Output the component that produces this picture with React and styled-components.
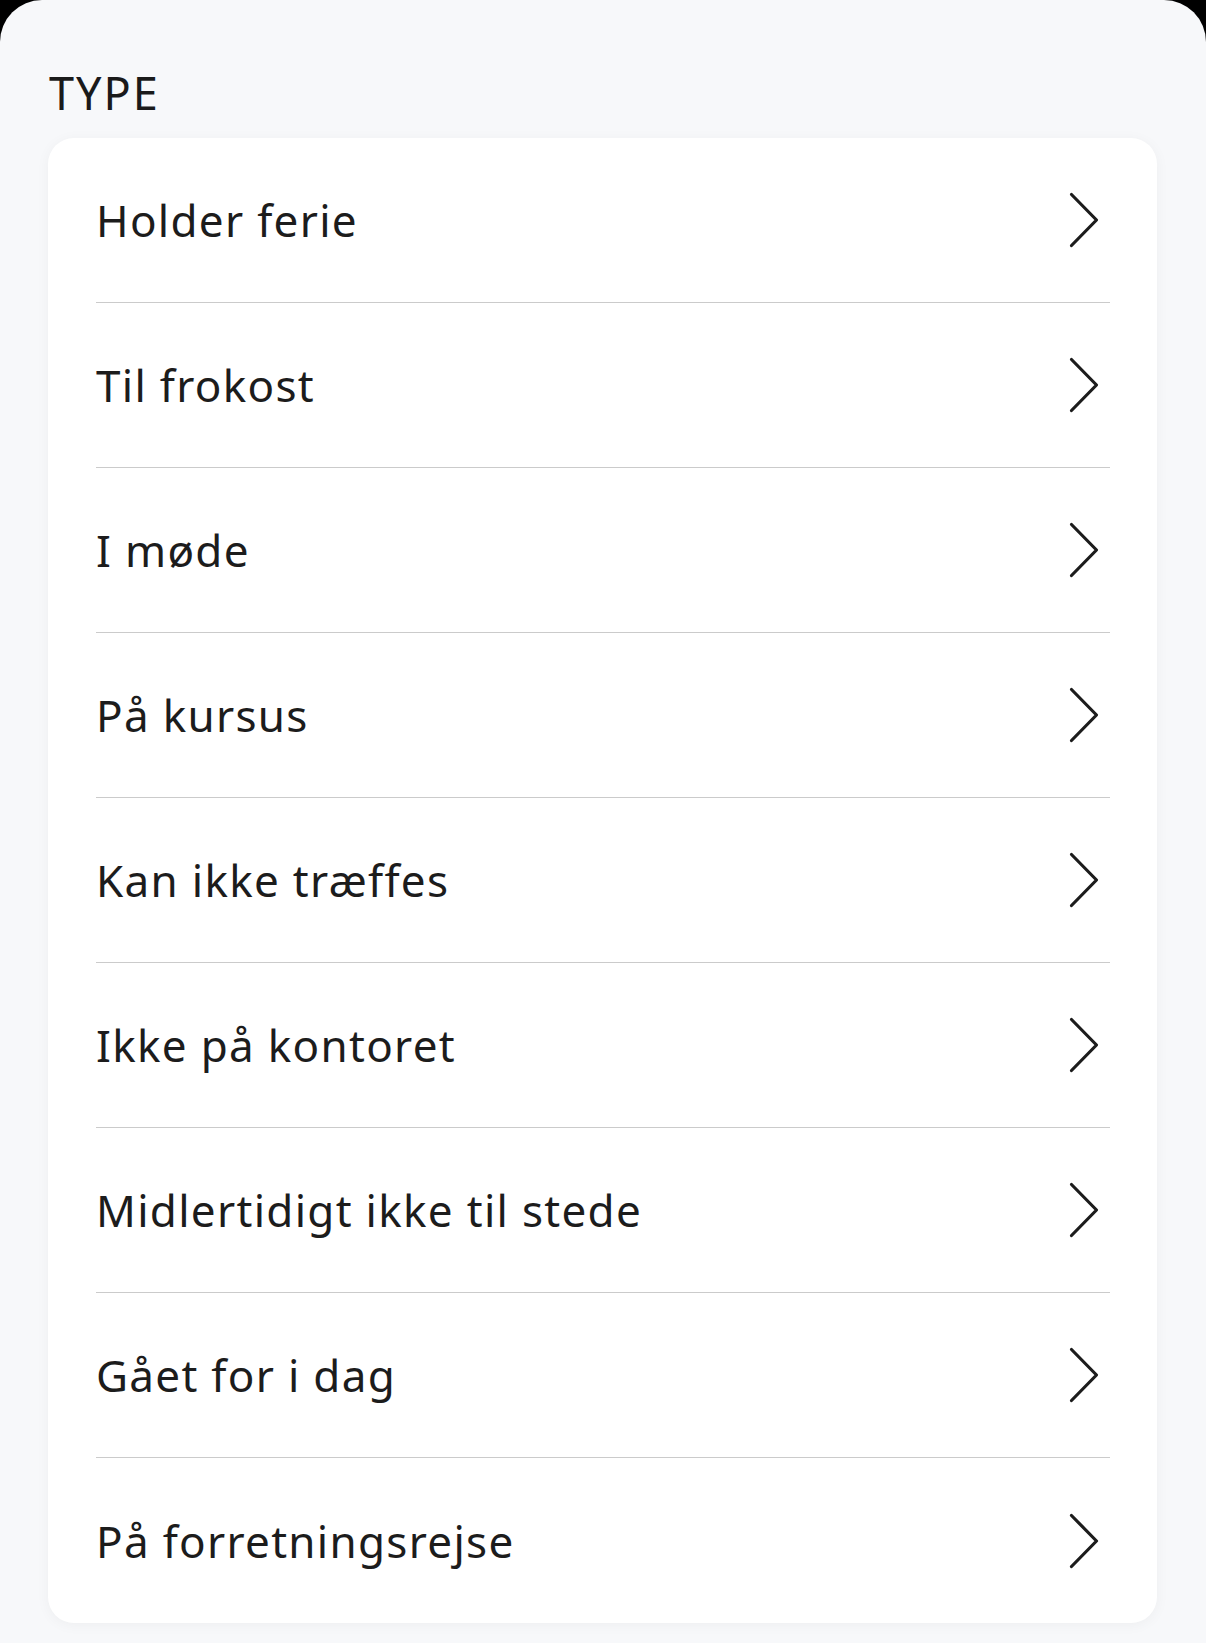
import React from 'react';
import styled, { createGlobalStyle } from 'styled-components';

const GlobalStyle = createGlobalStyle`
  html, body {
    margin: 0;
    padding: 0;
    background: #000;
  }
  body {
    font-family: "Noto Sans", "Open Sans", sans-serif;
    -webkit-font-smoothing: antialiased;
  }
`;

const Sheet = styled.div`
  min-height: 1643px;
  box-sizing: border-box;
  background: #f7f8fa;
  border-radius: 42px 42px 0 0;
  padding: 66px 49px 0 48px;
`;

const SectionTitle = styled.h2`
  margin: 0 0 18px 1px;
  font-size: 45px;
  line-height: 54px;
  font-weight: 400;
  color: #1a1a1a;
  letter-spacing: 2px;
`;

const Card = styled.ul`
  list-style: none;
  margin: 0;
  padding: 0 47px 0 48px;
  background: #fff;
  border-radius: 26px;
  box-shadow: 0 2px 14px rgba(0, 0, 0, 0.045);
`;

const Row = styled.li`
  display: flex;
  align-items: center;
  justify-content: space-between;
  height: 165px;
  box-sizing: border-box;
  padding-right: 11px;
  border-bottom: ${({ $last }) => ($last ? 'none' : '1px solid #cbcbcb')};
  cursor: pointer;
`;

const Label = styled.span`
  font-size: 44px;
  color: #1c1c1c;
  letter-spacing: 1.3px;
`;

const Chevron = () => (
  <svg width="30" height="56" viewBox="0 0 30 56" fill="none">
    <polyline
      points="2.5,2.5 27.5,28 2.5,53.5"
      stroke="#1c1c1c"
      strokeWidth="3.2"
      strokeLinecap="round"
      strokeLinejoin="round"
    />
  </svg>
);

const types = [
  'Holder ferie',
  'Til frokost',
  'I møde',
  'På kursus',
  'Kan ikke træffes',
  'Ikke på kontoret',
  'Midlertidigt ikke til stede',
  'Gået for i dag',
  'På forretningsrejse',
];

export default function App() {
  return (
    <>
      <GlobalStyle />
      <Sheet>
        <SectionTitle>TYPE</SectionTitle>
        <Card>
          {types.map((t, i) => (
            <Row key={t} $last={i === types.length - 1}>
              <Label>{t}</Label>
              <Chevron />
            </Row>
          ))}
        </Card>
      </Sheet>
    </>
  );
}
